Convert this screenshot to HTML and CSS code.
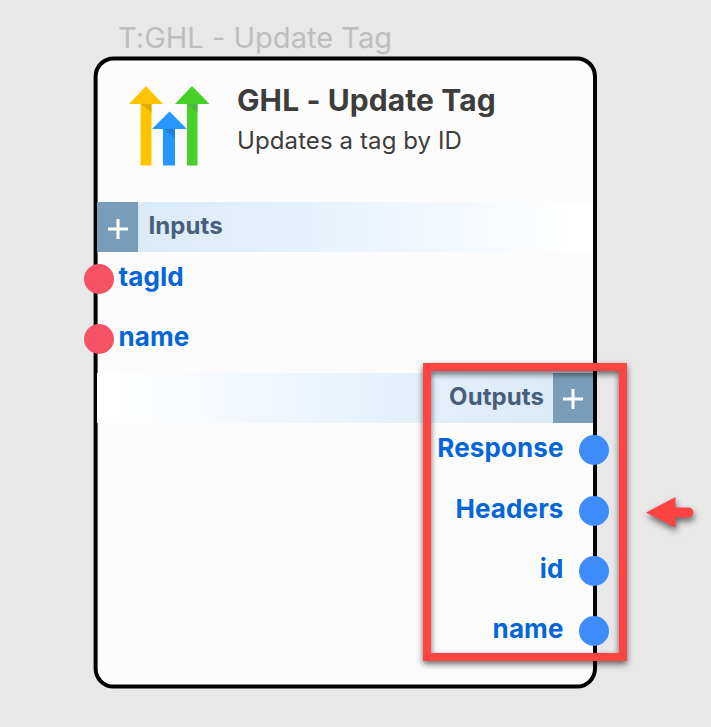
FILE: index.html
```
<!DOCTYPE html>
<html lang="en">
<head>
<meta charset="utf-8">
<title>GHL - Update Tag</title>
<link rel="stylesheet" href="styles.css">
</head>
<body>
<div class="node-label"><span>T:GHL - Update Tag</span></div>
<main class="node">
  <svg class="frame" viewBox="0 0 504 633" width="504" height="633"><rect x="2.6" y="2.5" width="499.4" height="628.1" rx="18"/></svg>
  <header class="head">
    <svg class="logo" viewBox="0 0 81 81" width="81" height="81">
      <path fill="#ffc400" d="M17 0L34 18H22.500V79.500H11.500V18H0z"/>
      <path fill="#47d025" d="M63 0L80.500 18H68.500V79.500H58V18H46z"/>
      <path fill="#2896ff" d="M40.500 25.500L58 43H46V79.500H34V43H23z"/>
      <path fill="#dba900" d="M12.500 18H22.500V27z"/>
      <path fill="#4bb644" d="M58.500 18H68.500V27z"/>
      <path fill="#2181dd" d="M35 43H46V53z"/>
    </svg>
    <div class="titles">
      <h1><span>GHL - Update Tag</span></h1>
      <p><span>Updates a tag by ID</span></p>
    </div>
  </header>
  <section class="band band-in">
    <button class="add" aria-label="Add input"><svg viewBox="0 0 20 20" width="20" height="20"><path d="M0 10H20M10 0V20"/></svg></button>
    <h2>Inputs</h2>
  </section>
  <ul class="ports ports-in">
    <li><i class="dot"></i><span>tagId</span></li>
    <li><i class="dot"></i><span>name</span></li>
  </ul>
  <section class="band band-out">
    <h2>Outputs</h2>
    <button class="add" aria-label="Add output"><svg viewBox="0 0 20 20" width="20" height="20"><path d="M0 10H20M10 0V20"/></svg></button>
  </section>
  <ul class="ports ports-out">
    <li><span>Response</span><i class="dot"></i></li>
    <li><span>Headers</span><i class="dot"></i></li>
    <li><span>id</span><i class="dot"></i></li>
    <li><span>name</span><i class="dot"></i></li>
  </ul>
</main>
<div class="highlight"></div>
<svg class="pointer" viewBox="0 0 50 32" width="50" height="32"><path d="M0 15.500L29.500 0V10.500H42.500A5 5 0 0 1 42.500 20.500H29.500V30.500z"/></svg>
</body>
</html>
```
FILE: styles.css
```
* { box-sizing: border-box; margin: 0; padding: 0; }
body {
  position: relative;
  width: 711px;
  height: 727px;
  overflow: hidden;
  background: #e8e8e8;
  font-family: Inter, "Liberation Sans", sans-serif;
}
.node-label {
  height: 56px;
  padding: 20px 0 0 118px;
  font-size: 29px;
  line-height: 36px;
  letter-spacing: .02px;
  color: #bdbdbd;
  white-space: nowrap;
}
.node {
  position: relative;
  width: 504px;
  height: 633px;
  margin-left: 93px;
}
.frame { position: absolute; inset: 0; }
.frame rect { fill: #fcfcfc; stroke: #000; stroke-width: 4; }
.head {
  position: relative;
  display: flex;
  height: 145px;
  padding: 30px 0 0 36px;
}
.titles { padding-left: 27px; color: #3d3d3d; white-space: nowrap; }
h1 { font-size: 30px; line-height: 36px; font-weight: 700; letter-spacing: .1px; margin-top: -4px; }
.titles p { font-size: 24px; line-height: 30px; letter-spacing: .1px; margin-top: 8px; }
.band {
  position: relative;
  display: flex;
  align-items: center;
  height: 50px;
  margin: 0 4px;
  color: #475f7b;
}
.band-in { height: 50px; margin-top: 1px; background: linear-gradient(90deg, #d8e9f7, #e2f0fa 35%, #edf5fd 58%, #fff 97%); }
.band-out { margin-top: 1px; justify-content: flex-end; background: linear-gradient(270deg, #d8e9f7, #e2f0fa 35%, #edf5fd 58%, #fff 97%); }
.band h2 { font-size: 24px; line-height: 30px; font-weight: 700; letter-spacing: .08px; padding: 0 10.500px; margin-top: -2px; }
.band-out h2 { padding-right: 9px; }
.head { height: 144px; }
.band-in { margin-top: 2px; }
.add {
  display: grid;
  place-items: center;
  width: 41px;
  height: 100%;
  padding-top: 3px;
  border: 0;
  background: #799cb8;
}
.band-out .add { width: 40px; padding-top: 2px; }
.add path { stroke: #fff; stroke-width: 3; }
.ports {
  position: relative;
  display: grid;
  align-content: start;
  gap: 30.4px;
  list-style: none;
  font-size: 26px;
  font-weight: 700;
  letter-spacing: .1px;
  color: #0566d8;
}
.ports li { display: flex; align-items: center; height: 30px; }
.ports span { line-height: 30px; margin-top: -4px; }
.dot { width: 30px; height: 30px; border-radius: 50%; }
.ports-in { height: 120px; padding-top: 12px; margin-left: -9.500px; }
.ports-in li { gap: 5px; }
.ports-in .dot { background: #f55266; }
.ports-out { padding-top: 12.300px; margin-right: -12px; }
.ports-out li { justify-content: flex-end; gap: 15.500px; }
.ports-out .dot { background: #3e8bfc; }
.highlight {
  position: absolute;
  left: 423px;
  top: 363px;
  width: 204px;
  height: 298px;
  border: 8px solid #fe4343;
  filter: drop-shadow(0 3px 3px rgba(0, 0, 0, .6));
}
.pointer {
  position: absolute;
  left: 646px;
  top: 497px;
  overflow: visible;
  filter: drop-shadow(1px 4px 3px rgba(0, 0, 0, .55));
}
.pointer path { fill: #fe4343; }
```
